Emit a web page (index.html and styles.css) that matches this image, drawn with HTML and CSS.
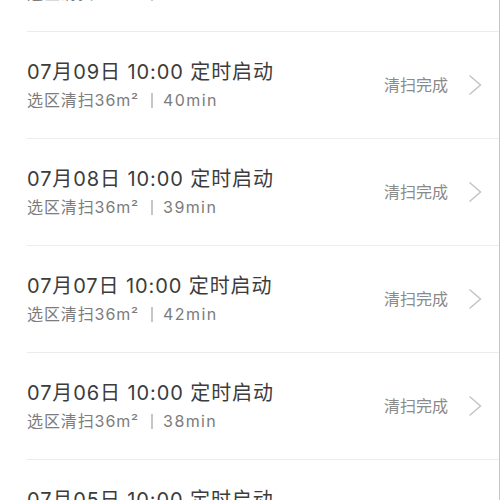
FILE: index.html
```html
<!DOCTYPE html>
<html lang="zh-CN">
<head>
<meta charset="utf-8">
<title>清扫记录</title>
<link rel="stylesheet" href="styles.css">
</head>
<body>
<div class="screen">
  <ul class="records">
    <li class="record">
      <div class="info">
        <div class="title">07月10日 10:00 定时启动</div>
        <div class="meta">选区清扫36m²<span class="sep"></span><span class="dur">41min</span></div>
      </div>
      <div class="status">清扫完成</div>
      <svg class="chev" width="14" height="22" viewBox="0 0 14 22"><polyline points="1.5,1.5 12.5,11 1.5,20.5" fill="none" stroke="#c4c4c4" stroke-width="1.5"/></svg>
    </li>
    <li class="record">
      <div class="info">
        <div class="title">07月09日 10:00 定时启动</div>
        <div class="meta">选区清扫36m²<span class="sep"></span><span class="dur">40min</span></div>
      </div>
      <div class="status">清扫完成</div>
      <svg class="chev" width="14" height="22" viewBox="0 0 14 22"><polyline points="1.5,1.5 12.5,11 1.5,20.5" fill="none" stroke="#c4c4c4" stroke-width="1.5"/></svg>
    </li>
    <li class="record">
      <div class="info">
        <div class="title">07月08日 10:00 定时启动</div>
        <div class="meta">选区清扫36m²<span class="sep"></span><span class="dur">39min</span></div>
      </div>
      <div class="status">清扫完成</div>
      <svg class="chev" width="14" height="22" viewBox="0 0 14 22"><polyline points="1.5,1.5 12.5,11 1.5,20.5" fill="none" stroke="#c4c4c4" stroke-width="1.5"/></svg>
    </li>
    <li class="record">
      <div class="info">
        <div class="title">07月07日 10:00 定时启动</div>
        <div class="meta">选区清扫36m²<span class="sep"></span><span class="dur">42min</span></div>
      </div>
      <div class="status">清扫完成</div>
      <svg class="chev" width="14" height="22" viewBox="0 0 14 22"><polyline points="1.5,1.5 12.5,11 1.5,20.5" fill="none" stroke="#c4c4c4" stroke-width="1.5"/></svg>
    </li>
    <li class="record">
      <div class="info">
        <div class="title">07月06日 10:00 定时启动</div>
        <div class="meta">选区清扫36m²<span class="sep"></span><span class="dur">38min</span></div>
      </div>
      <div class="status">清扫完成</div>
      <svg class="chev" width="14" height="22" viewBox="0 0 14 22"><polyline points="1.5,1.5 12.5,11 1.5,20.5" fill="none" stroke="#c4c4c4" stroke-width="1.5"/></svg>
    </li>
    <li class="record">
      <div class="info">
        <div class="title">07月05日 10:00 定时启动</div>
        <div class="meta">选区清扫36m²<span class="sep"></span><span class="dur">40min</span></div>
      </div>
      <div class="status">清扫完成</div>
      <svg class="chev" width="14" height="22" viewBox="0 0 14 22"><polyline points="1.5,1.5 12.5,11 1.5,20.5" fill="none" stroke="#c4c4c4" stroke-width="1.5"/></svg>
    </li>
  </ul>
</div>
</body>
</html>
```
FILE: styles.css
```css
html, body {
  margin: 0;
  padding: 0;
  background: #ffffff;
  height: 500px;
  overflow: hidden;
}

body {
  font-family: Inter, "Noto Sans CJK SC", sans-serif;
}

.screen {
  width: 499px;
  height: 500px;
  border-right: 1px solid #c6c6c6;
  overflow: hidden;
}

.records {
  list-style: none;
  margin: -75px 0 0 0;
  padding: 0;
}

.record {
  display: flex;
  align-items: center;
  height: 106px;
  margin-left: 27px;
  padding-right: 17px;
  border-bottom: 1px solid #ececec;
}

.info {
  flex: 1;
  display: flex;
  flex-direction: column;
  gap: 4px;
}

.title {
  font-size: 20px;
  line-height: 26px;
  letter-spacing: 0.9px;
  color: #3c3c3c;
}

.meta {
  display: flex;
  align-items: center;
  font-size: 16px;
  line-height: 22px;
  letter-spacing: 0.9px;
  color: #7c7c7c;
}

.sep {
  display: inline-block;
  width: 2px;
  height: 15px;
  background: #c6c6c6;
  margin: 0 10px 0 12px;
}

.dur {
  letter-spacing: 1.4px;
}

.status {
  font-size: 16px;
  line-height: 22px;
  color: #8a8a8a;
  margin-right: 20px;
}

.chev {
  display: block;
  flex: none;
}
```
